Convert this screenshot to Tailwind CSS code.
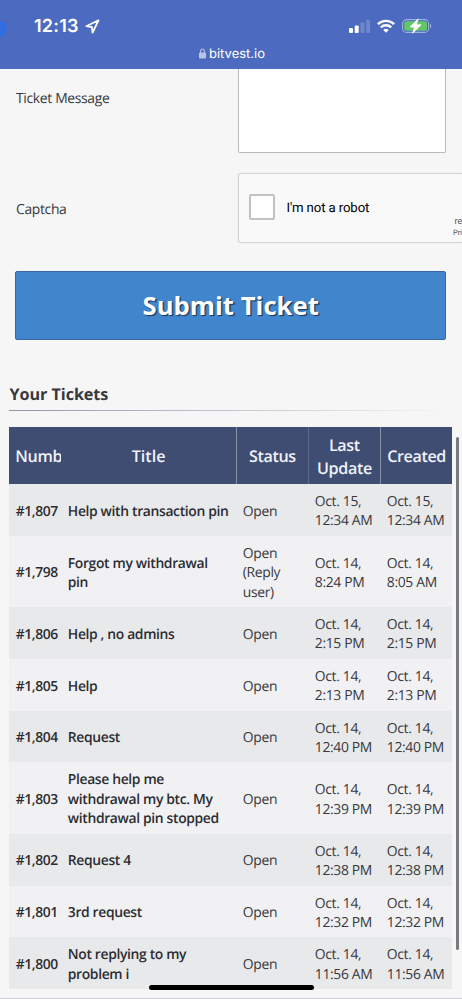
<!DOCTYPE html>
<html lang="en">

<head>
    <meta charset="UTF-8">
    <meta name="viewport" content="width=device-width, initial-scale=1.0">
    <title>Support Tickets</title>
    <script src="https://cdn.jsdelivr.net/npm/@tailwindcss/browser@4"></script>
</head>

<body class="relative h-[999px] w-[462px] overflow-hidden bg-[#f6f6f7] font-['Open_Sans',sans-serif] text-[#37383c] [text-rendering:geometricPrecision]">
    <!-- phone status bar and address -->
    <header class="relative h-[69px] bg-[#4c6bc0] text-white font-['Inter',sans-serif]">
        <div class="absolute -left-[9px] top-[21px] size-4 rounded-full bg-[#2f6de0]"></div>
        <div class="flex h-[52px] items-center pl-[34px] pr-[30px]">
            <span class="w-[46px] whitespace-nowrap pt-px text-[18px] font-semibold tracking-[0.2px]">12:13</span>
            <svg class="ml-[5px] size-[15px]" viewBox="0 0 15 15" fill="none" stroke="currentColor" stroke-width="1.8" stroke-linejoin="round">
                <path d="M13.5 1.3 1.3 7.2l5.6.8.7 5.6z" />
            </svg>
            <svg class="ml-auto h-[14px] w-[21px]" viewBox="0 0 21 14" fill="currentColor">
                <rect x="0" y="9" width="4" height="5" rx="1" />
                <rect x="5.7" y="6.5" width="4" height="7.5" rx="1" />
                <rect x="11.5" y="3.5" width="4" height="10.5" rx="1" opacity=".2" />
                <rect x="17.2" y="0.8" width="3.8" height="13.2" rx="1" opacity=".2" />
            </svg>
            <svg class="ml-[7px] h-[14px] w-[18px]" viewBox="0 0 18 14" fill="none" stroke="currentColor" stroke-width="2.4">
                <path d="M.9 5.2a11.6 11.6 0 0 1 16.2 0" />
                <path d="M3.8 8.4a7.5 7.5 0 0 1 10.4 0" />
                <path d="M9 13.8 6.3 11a3.9 3.9 0 0 1 5.4 0z" fill="currentColor" stroke="none" />
            </svg>
            <svg class="ml-[7px] h-[16px] w-[30px]" viewBox="0 0 30 16">
                <rect x=".6" y="1.6" width="26" height="12.8" rx="4" fill="none" stroke="#9eb0df" stroke-width="1.1" />
                <rect x="2.2" y="3.2" width="22.8" height="9.6" rx="2.5" fill="#62c766" />
                <path d="M28 5.7c1.7.7 1.7 3.9 0 4.6z" fill="#9eb0df" />
                <path d="M16.2.8 8 9h4.5l-1.8 6.2 8.4-8.4h-4.7z" fill="#fff" stroke="#fff" stroke-width=".8" stroke-linejoin="round" />
            </svg>
        </div>
        <div class="absolute left-[199px] top-[46px] flex items-center gap-[3px]">
            <svg class="mb-px h-[11px] w-[7px]" viewBox="0 0 7 11" fill="#b6c2e6">
                <path d="M1.6 5V3.2a1.9 2.2 0 0 1 3.8 0V5" fill="none" stroke="#b6c2e6" stroke-width="1.1" />
                <rect y="4.6" width="7" height="6" rx="1" />
            </svg>
            <span class="text-[13px] leading-4">bitvest.io</span>
        </div>
    </header>

    <main>
        <form class="text-[13.9px]">
            <div class="flex h-[84px]">
                <label class="w-[237.5px] pl-4 pt-[20px] leading-5 tracking-[-0.33px]">Ticket Message</label>
                <div class="w-[208.5px] rounded-b-[2px] border border-t-0 border-[#b9b9b9] bg-white"></div>
            </div>
            <div class="mt-[20px] flex h-[70px] items-center">
                <label class="w-[237.5px] shrink-0 pl-4 pt-[5px] tracking-[-0.33px]">Captcha</label>
                <div class="relative flex h-[70px] w-[224.5px] shrink-0 items-center overflow-hidden rounded-l-[3px] border border-r-0 border-[#d3d3d3] bg-[#f9f9f9] pl-[10.5px] font-['Roboto',sans-serif] text-black shadow-[0_0_2px_rgba(0,0,0,0.08)]">
                    <div class="mb-[2px] size-[26px] rounded-[2px] border-2 border-[#c1c1c1] bg-white"></div>
                    <span class="ml-[11.5px] pt-[2px] text-[13.2px] tracking-[-0.12px]">I'm not a robot</span>
                    <div class="absolute left-[214.5px] top-[42px] whitespace-nowrap text-[#555]">
                        <p class="pl-[1.5px] text-[9.2px] leading-[11px]">reCAPTCHA</p>
                        <p class="text-[7.5px] leading-[12px]">Privacy - Terms</p>
                    </div>
                </div>
            </div>
            <button class="ml-[15.4px] mt-[28px] block h-[69px] w-[430.6px] rounded-[2px] border border-[#3568a5] bg-[#4185cd] pt-px text-[25.7px] font-bold text-white [text-shadow:1.3px_1.3px_1px_#1c3350]">Submit Ticket</button>
        </form>

        <h2 class="ml-[9.5px] mt-[41.5px] text-[16.2px] font-bold leading-6 tracking-[-0.07px]">Your Tickets</h2>
        <div class="ml-[9px] mt-[4px] h-px w-[440px] bg-linear-to-r from-[#9394ab] to-transparent"></div>

        <section class="ml-[9.3px] mt-[16.5px] w-[443px]">
            <div class="grid h-[57px] grid-cols-[52px_175.6px_72px_72px_71.4px] items-stretch bg-[#3f4d72] text-center text-[16.1px] font-semibold leading-[22.3px] text-[#f0f2fa] *:flex *:items-center *:justify-center *:pt-[2px]">
                <div><span class="ml-[6px] w-[46px] overflow-hidden text-left tracking-[-0.3px]">Numb</span></div>
                <div class="border-r border-[#8791ab]">Title</div>
                <div class="border-r border-[#5d698a] tracking-[-0.35px]">Status</div>
                <div class="border-r border-[#8791ab] tracking-[-0.35px]">Last<br>Update</div>
                <div class="tracking-[-0.4px]">Created</div>
            </div>
            <div class="tickets text-[13.9px] leading-[19.4px]">
                <!-- filled by javascript -->
            </div>
        </section>
    </main>

    <div class="absolute left-[456px] top-[437px] h-[513px] w-[3px] rounded-full bg-[#777b7d]"></div>
    <div class="absolute left-0 top-[998px] h-px w-full bg-[#d0d1d7]"></div>
    <div class="absolute left-[149px] top-[985px] h-[5px] w-[165px] rounded-full bg-black"></div>

    <script>
        const tickets = [
            ['#1,807', 'Help with transaction pin', 'Open', 'Oct. 15,<br>12:34 AM', 'Oct. 15,<br>12:34 AM'],
            ['#1,798', 'Forgot my withdrawal<br>pin', 'Open<br>(Reply<br>user)', 'Oct. 14,<br>8:24 PM', 'Oct. 14,<br>8:05 AM'],
            ['#1,806', 'Help , no admins', 'Open', 'Oct. 14,<br>2:15 PM', 'Oct. 14,<br>2:15 PM'],
            ['#1,805', 'Help', 'Open', 'Oct. 14,<br>2:13 PM', 'Oct. 14,<br>2:13 PM'],
            ['#1,804', 'Request', 'Open', 'Oct. 14,<br>12:40 PM', 'Oct. 14,<br>12:40 PM'],
            ['#1,803', 'Please help me<br>withdrawal my btc. My<br>withdrawal pin stopped', 'Open', 'Oct. 14,<br>12:39 PM', 'Oct. 14,<br>12:39 PM'],
            ['#1,802', 'Request 4', 'Open', 'Oct. 14,<br>12:38 PM', 'Oct. 14,<br>12:38 PM'],
            ['#1,801', '3rd request', 'Open', 'Oct. 14,<br>12:32 PM', 'Oct. 14,<br>12:32 PM'],
            ['#1,800', 'Not replying to my<br>problem i', 'Open', 'Oct. 14,<br>11:56 AM', 'Oct. 14,<br>11:56 AM']
        ]

        let rows = ``
        tickets.forEach(([number, title, status, updated, created]) => {
            rows += `<div class="grid grid-cols-[52px_175px_72px_72px_72px] items-center whitespace-nowrap pb-[5px] pt-[8px] *:pl-[6.5px] odd:bg-[#e8e9eb] even:bg-[#f1f1f3]">
                <div class="font-[550] tracking-[-0.42px] text-[#2c2d31]">${number}</div>
                <div class="font-[550] tracking-[-0.35px] text-[#2c2d31]">${title}</div>
                <div class="tracking-[-0.33px]">${status}</div>
                <div class="tracking-[-0.33px]">${updated}</div>
                <div class="tracking-[-0.33px]">${created}</div>
            </div>`
        })
        document.querySelector('.tickets').innerHTML = rows
    </script>
</body>

</html>
